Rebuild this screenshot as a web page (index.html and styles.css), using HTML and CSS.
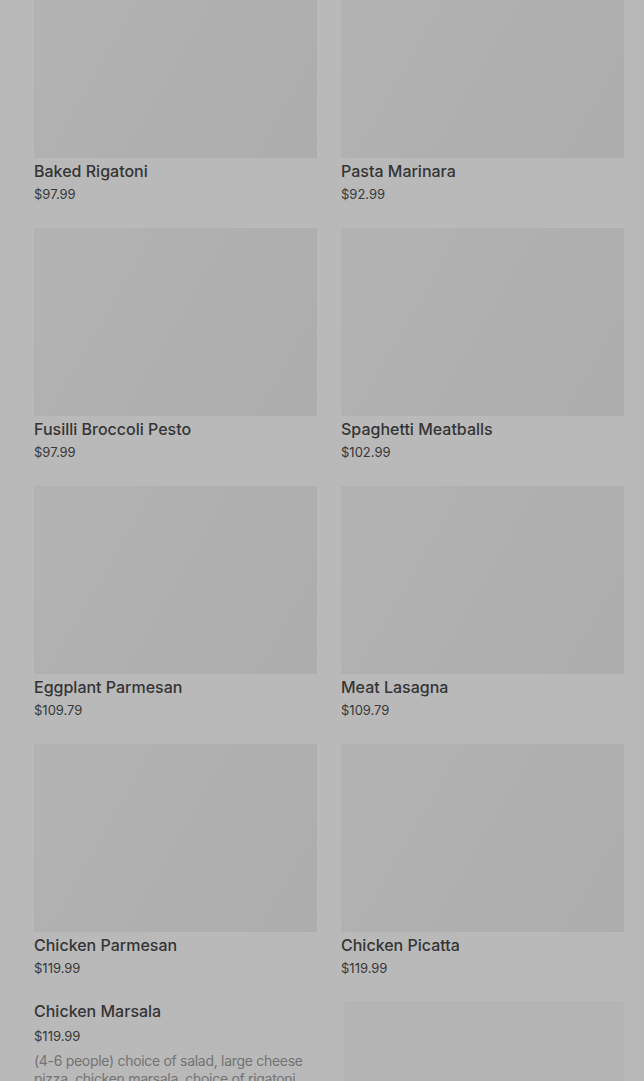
FILE: index.html
```html
<html>
    <head>
        <title>Menu</title>
        <link rel="stylesheet" href="styles.css">
    </head>
    <body>
        <div class="menu">
            <div class="menu-grid">
                <div class="item">
                    <div class="item-photo"></div>
                    <h3 class="item-name">Baked Rigatoni</h3>
                    <p class="item-price">$97.99</p>
                </div>
                <div class="item">
                    <div class="item-photo"></div>
                    <h3 class="item-name">Pasta Marinara</h3>
                    <p class="item-price">$92.99</p>
                </div>

                <div class="item">
                    <div class="item-photo"></div>
                    <h3 class="item-name">Fusilli Broccoli Pesto</h3>
                    <p class="item-price">$97.99</p>
                </div>
                <div class="item">
                    <div class="item-photo"></div>
                    <h3 class="item-name">Spaghetti Meatballs</h3>
                    <p class="item-price">$102.99</p>
                </div>

                <div class="item">
                    <div class="item-photo"></div>
                    <h3 class="item-name">Eggplant Parmesan</h3>
                    <p class="item-price">$109.79</p>
                </div>
                <div class="item">
                    <div class="item-photo"></div>
                    <h3 class="item-name">Meat Lasagna</h3>
                    <p class="item-price">$109.79</p>
                </div>

                <div class="item">
                    <div class="item-photo"></div>
                    <h3 class="item-name">Chicken Parmesan</h3>
                    <p class="item-price">$119.99</p>
                </div>
                <div class="item">
                    <div class="item-photo"></div>
                    <h3 class="item-name">Chicken Picatta</h3>
                    <p class="item-price">$119.99</p>
                </div>
            </div>

            <!-- wide item with description -->
            <div class="item-wide">
                <div class="item-text">
                    <h3 class="item-name">Chicken Marsala</h3>
                    <p class="item-price">$119.99</p>
                    <p class="item-desc">(4-6 people) choice of salad, large cheese pizza, chicken marsala, choice of rigatoni, penne or spaghetti, garlic bread</p>
                </div>
                <div class="item-photo wide"></div>
            </div>
        </div>

        <!-- dimmed backdrop of an open dialog -->
        <div class="backdrop"></div>
    </body>
</html>
```

FILE: styles.css
```css
* {
    padding: 0;
    margin: 0;
    box-sizing: border-box;
}

body {
    background: #fff;
    font-family: Inter, "Noto Sans", sans-serif;
    overflow: hidden;
}

.menu {
    margin-top: -30px;
    padding: 0 20px 0 34px;
}

.menu-grid {
    display: grid;
    grid-template-columns: 1fr 1fr;
    column-gap: 24px;
    row-gap: 23px;
}

.item-photo {
    height: 188px;
    background: linear-gradient(120deg, #f6f6f6, #efefef);
}

.item-name {
    padding-top: 1px;
    font-size: 16px;
    font-weight: 500;
    line-height: 24px;
    color: #4a4a4a;
}

.item-price {
    font-size: 13px;
    line-height: 22px;
    color: #505050;
}

.item-wide {
    display: flex;
    gap: 24px;
    margin-top: 22px;
}

.item-text {
    flex: 1;
}

.item-wide .item-name {
    padding-top: 0;
    line-height: 20px;
}

.item-wide .item-price {
    margin-top: 4px;
}

.item-desc {
    margin-top: 5px;
    font-size: 14px;
    line-height: 18px;
    letter-spacing: -0.3px;
    color: #a0a0a0;
}

.item-photo.wide {
    width: 280px;
    flex-shrink: 0;
    background: #f9f9f9;
    border: 1px solid #fbfbfb;
}

.backdrop {
    position: fixed;
    top: 0;
    left: 0;
    right: 0;
    bottom: 0;
    background: rgba(0, 0, 0, .275);
}
```
